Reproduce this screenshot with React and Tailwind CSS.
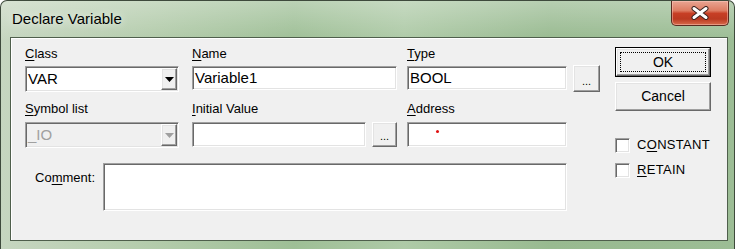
import React from 'react';

const sunken =
  'border border-t-[#a0a0a0] border-l-[#a0a0a0] border-b-white border-r-white shadow-[inset_1px_1px_0_#696969,inset_-1px_-1px_0_#e3e3e3]';
const raised =
  'border border-t-white border-l-white border-b-[#696969] border-r-[#696969] shadow-[inset_-1px_-1px_0_#a0a0a0,inset_1px_1px_0_#e3e3e3] bg-[#f0f0f0]';

const Key = ({ children }) => (
  <span className="underline decoration-1 underline-offset-[2px]">{children}</span>
);

const Label = ({ children, className = '' }) => (
  <div className={`h-[16px] text-[13px] leading-[16px] text-black ${className}`}>{children}</div>
);

const Arrow = ({ color = '#000' }) => (
  <svg width="9" height="5" viewBox="0 0 9 5">
    <polygon points="0,0 9,0 4.5,5" fill={color} />
  </svg>
);

const Combo = ({ value, disabled }) => (
  <div className={`h-[26px] flex ${sunken} ${disabled ? 'bg-[#f0f0f0]' : 'bg-white'}`}>
    <div
      className={`flex-1 flex items-center pl-[2px] text-[15px] ${disabled ? 'text-[#a0a0a0]' : 'text-black'}`}
    >
      {value}
    </div>
    <div className={`w-[16px] m-[1px] flex items-center justify-center ${raised}`}>
      <Arrow color={disabled ? '#a0a0a0' : '#000'} />
    </div>
  </div>
);

const Edit = ({ className = '', children }) => (
  <div className={`bg-white flex items-center pl-[2px] text-[15px] text-black ${sunken} ${className}`}>
    {children}
  </div>
);

const DotsButton = ({ className = '' }) => (
  <div className={`flex items-end justify-center pb-[4px] text-[11px] leading-[11px] text-black ${raised} ${className}`}>
    ...
  </div>
);

const CheckRow = ({ children, className = '' }) => (
  <div className={`h-[16px] flex items-center ${className}`}>
    <div className={`w-[15px] h-[15px] bg-white ${sunken}`} />
    <div className="ml-[7px] text-[13px] leading-[16px] text-black tracking-[0.3px]">{children}</div>
  </div>
);

const CloseButton = () => (
  <div className="ml-auto mr-[5px] w-[58px] h-[25px] rounded-b-[5px] border border-t-0 border-[#5a2a20] bg-[linear-gradient(180deg,#e9a593_0%,#dd7c62_40%,#c73f25_52%,#bb3a21_75%,#d86a4b_100%)] shadow-[inset_0_0_0_1px_rgba(255,210,200,0.45)] flex items-center justify-center">
    <svg width="20" height="14" viewBox="0 0 20 14">
      <path d="M4 2.5 L16 11.5 M16 2.5 L4 11.5" stroke="#3b2320" strokeWidth="5" strokeLinecap="round" />
      <path d="M4 2.5 L16 11.5 M16 2.5 L4 11.5" stroke="#ffffff" strokeWidth="3" strokeLinecap="round" />
    </svg>
  </div>
);

export default function App() {
  return (
    <div className="w-[735px] h-[249px] bg-white font-['Liberation_Sans',Arial,sans-serif]">
      <div className="w-[735px] h-[249px] flex flex-col rounded-t-[7px] border border-b-0 border-[#3e4a3c] overflow-hidden bg-[linear-gradient(180deg,rgba(255,255,255,0.3)_0%,rgba(255,255,255,0)_16%),linear-gradient(90deg,#c6d6c0_0%,#b4ccac_20%,#9ebf96_40%,#aecaa7_55%,#98ba90_75%,#9cbd95_100%)]">
        {/* Title bar */}
        <div className="h-[36px] flex items-start">
          <div className="ml-[11px] mt-[9px] text-[15px] leading-[18px] text-black [text-shadow:0_0_8px_rgba(255,255,255,0.95)]">
            Declare Variable
          </div>
          <CloseButton />
        </div>

        {/* Client area */}
        <div className="flex-1 flex pl-[9px] pr-[6px] pb-[8px]">
          <div className="w-[718px] h-[204px] border border-[#4f5f4c] bg-[#f0f0f0] shadow-[inset_1px_1px_0_#ffffff] flex pl-[14px] pt-[8px]">
            {/* Fields */}
            <div className="w-[575px] flex flex-col">
              <div className="flex">
                <div className="w-[154px] flex flex-col">
                  <Label><Key>C</Key>lass</Label>
                  <div className="mt-[4px]">
                    <Combo value="VAR" />
                  </div>
                  <Label className="mt-[9px] text-[#333]"><Key>S</Key>ymbol list</Label>
                  <div className="mt-[5px]">
                    <Combo value="_IO" disabled />
                  </div>
                </div>

                <div className="ml-[13px] w-[205px] flex flex-col">
                  <Label><Key>N</Key>ame</Label>
                  <Edit className="mt-[4px] h-[24px]">Variable1</Edit>
                  <Label className="mt-[11px]"><Key>I</Key>nitial Value</Label>
                  <div className="mt-[5px] h-[25px] flex">
                    <Edit className="w-[174px] h-[25px]" />
                    <DotsButton className="ml-[6px] w-[25px] h-[25px]" />
                  </div>
                </div>

                <div className="ml-[10px] w-[193px] flex flex-col">
                  <Label><Key>T</Key>ype</Label>
                  <div className="mt-[4px] h-[26px] flex items-start">
                    <Edit className="w-[160px] h-[24px]">BOOL</Edit>
                    <DotsButton className="ml-[6px] -mt-[1px] w-[27px] h-[27px]" />
                  </div>
                  <Label className="mt-[9px]"><Key>A</Key>ddress</Label>
                  <div className={`mt-[5px] w-[160px] h-[25px] bg-white pl-[28px] pt-[7px] ${sunken}`}>
                    <div className="w-[3px] h-[3px] rounded-full bg-[#e01010]" />
                  </div>
                </div>
              </div>

              <div className="mt-[15px] flex items-start">
                <div className="w-[70px] mt-[7px] text-right text-[13px] leading-[16px] text-black">
                  Co<Key>m</Key>ment:
                </div>
                <div className={`ml-[8px] w-[464px] h-[48px] bg-white ${sunken}`} />
              </div>
            </div>

            {/* Buttons & options */}
            <div className="ml-[15px] w-[96px] flex flex-col">
              <div className="mt-[1px] h-[30px] border border-black flex">
                <div className={`flex-1 flex p-[3px] ${raised}`}>
                  <div className="flex-1 border border-dotted border-black flex items-center justify-center text-[14px] text-black">
                    OK
                  </div>
                </div>
              </div>
              <div className={`mt-[5px] h-[29px] flex items-center justify-center text-[14px] text-black ${raised}`}>
                Cancel
              </div>
              <CheckRow className="mt-[26px]">
                C<Key>O</Key>NSTANT
              </CheckRow>
              <CheckRow className="mt-[9px]">
                <Key>R</Key>ETAIN
              </CheckRow>
            </div>
          </div>
        </div>
      </div>
    </div>
  );
}
